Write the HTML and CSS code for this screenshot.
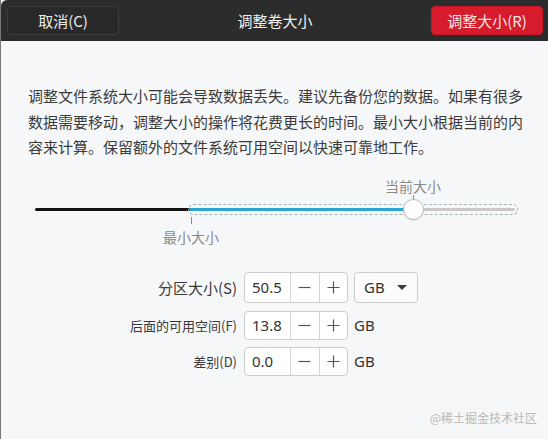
FILE: index.html
```html
<!DOCTYPE html>
<html lang="zh-CN">
<head>
<meta charset="utf-8">
<title>调整卷大小</title>
<link rel="stylesheet" href="styles.css">
</head>
<body>
<div class="window">
  <header class="headerbar">
    <button class="btn btn-cancel">取消(C)</button>
    <div class="title">调整卷大小</div>
    <button class="btn btn-danger">调整大小(R)</button>
  </header>
  <main class="content">
    <p class="desc">调整文件系统大小可能会导致数据丢失。建议先备份您的数据。如果有很多<br>数据需要移动，调整大小的操作将花费更长的时间。最小大小根据当前的内<br>容来计算。保留额外的文件系统可用空间以快速可靠地工作。</p>

    <div class="slider">
      <span class="mark-label mark-top" style="left: 378px">当前大小</span>
      <span class="tick tick-top" style="left: 378px"></span>
      <span class="track-fixed"></span>
      <span class="track-range"></span>
      <span class="track-fill"></span>
      <span class="track-rest"></span>
      <span class="knob" style="left: 378px"></span>
      <span class="tick tick-bottom" style="left: 156px"></span>
      <span class="mark-label mark-bottom" style="left: 156px">最小大小</span>
    </div>

    <div class="form">
      <label class="flabel flabel-big row1">分区大小(S)</label>
      <div class="spin row1">
        <span class="spin-entry">50.5</span>
        <span class="spin-btn"><svg width="13" height="13" viewBox="0 0 13 13"><path d="M0.5 6.5H12.5" stroke="#555" stroke-width="1.2"/></svg></span>
        <span class="spin-btn"><svg width="13" height="13" viewBox="0 0 13 13"><path d="M0.5 6.5H12.5M6.5 0.5V12.5" stroke="#555" stroke-width="1.2"/></svg></span>
      </div>
      <div class="combo row1">
        <span>GB</span>
        <span class="caret"></span>
      </div>

      <label class="flabel row2">后面的可用空间(F)</label>
      <div class="spin row2">
        <span class="spin-entry">13.8</span>
        <span class="spin-btn"><svg width="13" height="13" viewBox="0 0 13 13"><path d="M0.5 6.5H12.5" stroke="#555" stroke-width="1.2"/></svg></span>
        <span class="spin-btn"><svg width="13" height="13" viewBox="0 0 13 13"><path d="M0.5 6.5H12.5M6.5 0.5V12.5" stroke="#555" stroke-width="1.2"/></svg></span>
      </div>
      <span class="unit row2">GB</span>

      <label class="flabel row3">差别(D)</label>
      <div class="spin row3">
        <span class="spin-entry">0.0</span>
        <span class="spin-btn"><svg width="13" height="13" viewBox="0 0 13 13"><path d="M0.5 6.5H12.5" stroke="#555" stroke-width="1.2"/></svg></span>
        <span class="spin-btn"><svg width="13" height="13" viewBox="0 0 13 13"><path d="M0.5 6.5H12.5M6.5 0.5V12.5" stroke="#555" stroke-width="1.2"/></svg></span>
      </div>
      <span class="unit row3">GB</span>
    </div>
  </main>
  <div class="watermark">@稀土掘金技术社区</div>
</div>
</body>
</html>
```
FILE: styles.css
```css
html, body {
  margin: 0;
  padding: 0;
  height: 100%;
}
body {
  font-family: "Noto Sans", "Noto Sans CJK SC", sans-serif;
  background: #f6f7f9;
  color: #3a3a3a;
}
.window {
  position: relative;
  height: 100%;
  box-sizing: border-box;
  border-left: 1px solid #7a7a7a;
  background: #f6f7f9;
  overflow: hidden;
}
.headerbar {
  height: 41px;
  box-sizing: border-box;
  background: #2c2c2c;
  display: grid;
  grid-template-columns: 112px 1fr 112px;
  align-items: center;
  padding: 6px 5px 6px 6px;
  border-top-left-radius: 6px;
}
.btn {
  height: 29px;
  border-radius: 4px;
  font-family: "Noto Sans CJK SC", sans-serif;
  font-size: 15px;
  padding: 0;
  cursor: default;
}
.btn-cancel {
  background: #292929;
  border: 1px solid #3d3d3d;
  color: #ececec;
}
.btn-danger {
  background: #d61b2c;
  border: 1px solid #c81626;
  color: #f8e6e8;
}
.title {
  text-align: center;
  color: #f2f2f2;
  font-family: "Noto Sans CJK SC", sans-serif;
  font-size: 15px;
}
.content {
  padding: 42px 20px 0 27px;
}
.desc {
  margin: 0;
  font-family: "Noto Sans CJK SC", sans-serif;
  font-size: 15px;
  line-height: 25.5px;
  color: #3b3b3b;
  white-space: nowrap;
}
.slider {
  position: relative;
  width: 483px;
  height: 74px;
  margin: 15px 0 0 7px;
}
.mark-label {
  position: absolute;
  transform: translateX(-50%);
  font-family: "Noto Sans CJK SC", sans-serif;
  font-size: 14px;
  line-height: 18px;
  color: #8a8a8a;
  white-space: nowrap;
}
.mark-top { top: 2px; }
.mark-bottom { top: 53px; }
.tick {
  position: absolute;
  width: 1px;
  background: #8a8a8a;
}
.tick-top { top: 20px; height: 6px; }
.tick-bottom { top: 42px; height: 7px; }
.track-fixed {
  position: absolute;
  left: 0;
  top: 33px;
  width: 155px;
  height: 3px;
  background: #141414;
  border-radius: 2px;
}
.track-range {
  position: absolute;
  left: 153px;
  top: 29px;
  width: 330px;
  height: 11px;
  box-sizing: border-box;
  border: 1px dashed #a9b4b8;
  border-radius: 6px;
}
.track-fill {
  position: absolute;
  left: 155px;
  top: 33px;
  width: 223px;
  height: 3px;
  background: #2ba6cf;
}
.track-rest {
  position: absolute;
  left: 378px;
  top: 33px;
  width: 102px;
  height: 3px;
  background: #c9c9c9;
  border-radius: 2px;
}
.knob {
  position: absolute;
  top: 24px;
  width: 21px;
  height: 21px;
  margin-left: -10.5px;
  box-sizing: border-box;
  border-radius: 50%;
  background: #ffffff;
  border: 1px solid #b8b8b8;
  box-shadow: 0 1px 1px rgba(0,0,0,0.08);
}
.form {
  display: grid;
  grid-template-columns: 209px 111px 70px;
  grid-template-rows: 31px 37px 36px;
  align-items: end;
  margin-top: 23px;
}
.row1 { grid-row: 1; }
.row2 { grid-row: 2; }
.row3 { grid-row: 3; }
.flabel {
  grid-column: 1;
  justify-self: end;
  align-self: center;
  font-family: "Noto Sans CJK SC", sans-serif;
  font-size: 13px;
  color: #3a3a3a;
  white-space: nowrap;
}
.row2.flabel, .row3.flabel, .row2.unit, .row3.unit { align-self: end; line-height: 29px; }
.flabel-big { font-size: 15px; }
.spin {
  grid-column: 2;
  justify-self: start;
  margin-left: 7px;
  width: 104px;
  height: 29px;
  box-sizing: border-box;
  display: flex;
  background: #ffffff;
  border: 1px solid #cdcdcd;
  border-radius: 4px;
  font-size: 15px;
}
.row1.spin { height: 31px; }
.spin-entry {
  width: 45px;
  flex: none;
  box-sizing: border-box;
  padding-left: 7px;
  display: flex;
  align-items: center;
  color: #333;
}
.spin-btn {
  flex: 1;
  display: flex;
  align-items: center;
  justify-content: center;
  border-left: 1px solid #d6d6d6;
}
.spin-btn svg { display: block; }
.combo {
  grid-column: 3;
  justify-self: start;
  margin-left: 6px;
  width: 64px;
  height: 31px;
  box-sizing: border-box;
  display: flex;
  align-items: center;
  justify-content: space-between;
  padding: 0 10px 0 9px;
  background: #fbfbfb;
  border: 1px solid #cdcdcd;
  border-radius: 4px;
  font-size: 15px;
  color: #333;
}
.caret {
  width: 0;
  height: 0;
  border-left: 5px solid transparent;
  border-right: 5px solid transparent;
  border-top: 5px solid #3a3a3a;
}
.unit {
  grid-column: 3;
  margin-left: 6px;
  font-size: 15px;
  color: #333;
}
.watermark {
  position: absolute;
  right: 11px;
  bottom: 13px;
  font-family: "Noto Sans CJK SC", sans-serif;
  font-size: 12px;
  color: #b9b9b9;
}
```
